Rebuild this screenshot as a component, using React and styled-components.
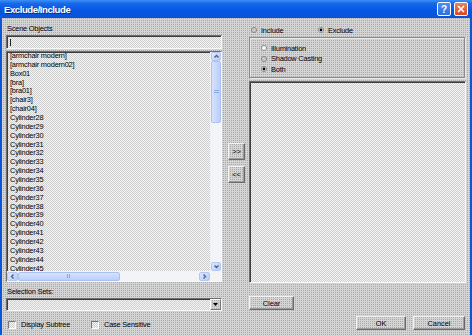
import React from "react";
import styled, { createGlobalStyle } from "styled-components";

const GlobalStyle = createGlobalStyle`
  html, body { margin: 0; padding: 0; background: #c9c9c9; }
  body { font-family: "Liberation Sans", Arial, sans-serif; }
`;

// dithered textures like the 256-colour capture
const dialogBg = "conic-gradient(#a9a9a9 0 25%, #d4d4d4 0) 0 0 / 2px 2px";
const listBg = "conic-gradient(#cfcfcf 0 25%, #f4f4f4 0 50%, #cfcfcf 0 75%, #f4f4f4 0) 0 0 / 2px 2px";

const Window = styled.div`
  width: 472px;
  height: 335px;
  display: flex;
  flex-direction: column;
  background: #0b55d8;
  overflow: hidden;
  font-size: 7.4px;
  letter-spacing: -0.2px;
  color: #000;
`;

const TitleBar = styled.div`
  height: 18px;
  flex: none;
  display: flex;
  align-items: center;
  padding: 0 4px 0 4px;
  background: linear-gradient(#3d8ff6 0%, #1668ea 20%, #0758e4 55%, #0a52d6 100%);
`;

const Title = styled.div`
  flex: 1;
  color: #fff;
  font-weight: bold;
  font-size: 9.6px;
  letter-spacing: -0.45px;
  text-shadow: 1px 1px 0 #0a2d8c;
`;

const TitleButton = styled.div`
  width: 12px;
  height: 12px;
  margin-left: 3px;
  border: 1px solid #fff;
  border-radius: 2px;
  display: flex;
  align-items: center;
  justify-content: center;
  background: ${(p) => (p.$close ? "linear-gradient(#e9835d, #d9481d)" : "linear-gradient(#4d8ef0, #2f6fe0)")};
  color: #fff;
  font-weight: bold;
  font-size: 10px;
`;

const Client = styled.div`
  flex: 1;
  margin: 0 2px 0 2px;
  background: ${dialogBg};
  display: flex;
  padding: 0 4px 0 4px;
`;

const LeftCol = styled.div`
  width: 216px;
  display: flex;
  flex-direction: column;
`;

const MidCol = styled.div`
  width: 27px;
  display: flex;
  flex-direction: column;
  gap: 6px;
  padding: 125px 0 0 6px;
  box-sizing: border-box;
`;

const RightCol = styled.div`
  width: 217px;
  display: flex;
  flex-direction: column;
`;

const Label = styled.div`
  height: 9px;
  line-height: 9px;
  margin-top: ${(p) => p.$top}px;
  padding-left: 1px;
  white-space: nowrap;
`;

const Sunken = styled.div`
  box-sizing: border-box;
  border-top: 1px solid #6e6e6e;
  border-left: 1px solid #6e6e6e;
  border-bottom: 1px solid #f8f8f8;
  border-right: 1px solid #f8f8f8;
  box-shadow: inset 1px 1px 0 #3c3c3c;
  background: ${listBg};
`;

const TextInput = styled(Sunken)`
  height: 14px;
  margin-top: 2px;
  padding: 2px 3px;
`;

const Caret = styled.div`
  width: 1px;
  height: 7px;
  margin-top: 1px;
  background: #222;
`;

const ListBox = styled(Sunken)`
  margin-top: ${(p) => p.$top}px;
  height: ${(p) => p.$h}px;
  display: grid;
  grid-template-columns: 1fr ${(p) => (p.$bars ? "11px" : "0")};
  grid-template-rows: 1fr ${(p) => (p.$bars ? "10px" : "0")};
  overflow: hidden;
`;

const Items = styled.div`
  overflow: hidden;
  padding: 0 0 0 3px;
`;

const Item = styled.div`
  height: 8.87px;
  line-height: 8.87px;
  white-space: nowrap;
`;

const VTrack = styled.div`
  background: #f3f4f8;
  display: flex;
  flex-direction: column;
  align-items: center;
  border-left: 1px solid #eef0f6;
`;

const HTrack = styled.div`
  background: #f3f4f8;
  display: flex;
  align-items: center;
`;

const Corner = styled.div`
  background: #f4f4f4;
`;

const ArrowBtn = styled.div`
  width: ${(p) => (p.$h ? 11 : 10)}px;
  height: ${(p) => (p.$h ? 9 : 9)}px;
  flex: none;
  box-sizing: border-box;
  border: 1px solid #b4c6f2;
  border-radius: 2px;
  background: linear-gradient(135deg, #dde7fd, #b8cbf6);
  display: flex;
  align-items: center;
  justify-content: center;
`;

const Thumb = styled.div`
  box-sizing: border-box;
  border: 1px solid #a9c0f2;
  border-radius: 2px;
  background: ${(p) => (p.$h ? "linear-gradient(#d6e2fd, #bccff8)" : "linear-gradient(90deg, #d6e2fd, #bccff8)")};
  width: ${(p) => (p.$h ? "102px" : "10px")};
  height: ${(p) => (p.$h ? "9px" : "62px")};
  display: flex;
  align-items: center;
  justify-content: center;
`;

const Grip = styled.div`
  width: ${(p) => (p.$h ? "4px" : "5px")};
  height: ${(p) => (p.$h ? "4px" : "4px")};
  background: ${(p) =>
    p.$h
      ? "repeating-linear-gradient(90deg, #8aa6e6 0 1px, transparent 1px 2px)"
      : "repeating-linear-gradient(#8aa6e6 0 1px, transparent 1px 2px)"};
`;

const VSpace = styled.div`
  flex: 1;
`;

const Chevron = ({ dir }) => {
  const d = {
    up: "M1.5 4.5 L3.5 2.5 L5.5 4.5",
    down: "M1.5 2.5 L3.5 4.5 L5.5 2.5",
    left: "M4.5 1.5 L2.5 3.5 L4.5 5.5",
    right: "M2.5 1.5 L4.5 3.5 L2.5 5.5",
  }[dir];
  return (
    <svg width="7" height="7" viewBox="0 0 7 7">
      <path d={d} fill="none" stroke="#4d6185" strokeWidth="1.3" />
    </svg>
  );
};

const Combo = styled(Sunken)`
  height: 13px;
  margin-top: 2px;
  display: flex;
  justify-content: flex-end;
`;

const ComboButton = styled.div`
  width: 11px;
  height: 100%;
  box-sizing: border-box;
  border-left: 1px solid #fff;
  border-top: 1px solid #fff;
  border-right: 1px solid #777;
  border-bottom: 1px solid #777;
  background: ${dialogBg};
  display: flex;
  align-items: center;
  justify-content: center;
`;

const CheckRow = styled.div`
  display: flex;
  align-items: center;
  height: 9px;
  margin-top: 9px;
  padding-left: 2px;
`;

const CheckItem = styled.label`
  display: flex;
  align-items: center;
  gap: 5px;
  width: ${(p) => p.$w}px;
  white-space: nowrap;
`;

const CheckBox = styled.span`
  width: 8px;
  height: 8px;
  box-sizing: border-box;
  border-top: 1px solid #777;
  border-left: 1px solid #777;
  border-bottom: 1px solid #fff;
  border-right: 1px solid #fff;
  background: ${listBg};
`;

const RadioRow = styled.div`
  display: flex;
  align-items: center;
  height: 8px;
  margin-top: 8px;
  padding-left: 2px;
`;

const RadioItem = styled.div`
  display: flex;
  align-items: center;
  gap: 4px;
  width: ${(p) => (p.$w ? `${p.$w}px` : "auto")};
  height: ${(p) => (p.$row ? "10.5px" : "auto")};
  white-space: nowrap;
`;

const Radio = ({ checked, dim }) => (
  <svg width="6" height="6" viewBox="0 0 6 6">
    <circle cx="3" cy="3" r="2.6" fill={dim ? "#c8c8c8" : "#f4f4f4"} stroke="#7a7a7a" strokeWidth="0.8" />
    {checked && <circle cx="3" cy="3" r="1.4" fill="#000" />}
  </svg>
);

const GroupBox = styled.div`
  margin-top: 3px;
  width: 216px;
  height: 41px;
  box-sizing: border-box;
  border: 1px solid #8a8a8a;
  box-shadow: inset 1px 1px 0 #e8e8e8, 1px 1px 0 #e8e8e8;
  padding: 5px 0 0 11px;
`;

const PushButton = styled.button`
  box-sizing: border-box;
  width: ${(p) => p.$w}px;
  height: 14px;
  margin: 0;
  padding: 0;
  font: inherit;
  color: #000;
  border-top: 1px solid #f4f4f4;
  border-left: 1px solid #f4f4f4;
  border-right: 1px solid #6a6a6a;
  border-bottom: 1px solid #6a6a6a;
  box-shadow: inset -1px -1px 0 #9c9c9c;
  background: ${dialogBg};
`;

const ClearRow = styled.div`
  margin-top: 13px;
`;

const FooterRow = styled.div`
  margin-top: 6px;
  display: flex;
  justify-content: flex-end;
  gap: 7px;
  padding-right: 1px;
`;

const objects = [
  "[armchair modern]",
  "[armchair modern02]",
  "Box01",
  "[bra]",
  "[bra01]",
  "[chair3]",
  "[chair04]",
];
for (let i = 28; i <= 45; i++) objects.push(`Cylinder${i}`);

export default function App() {
  return (
    <Window>
      <GlobalStyle />
      <TitleBar>
        <Title>Exclude/Include</Title>
        <TitleButton>?</TitleButton>
        <TitleButton $close>
          <svg width="8" height="8" viewBox="0 0 8 8">
            <path d="M1 1 L7 7 M7 1 L1 7" stroke="#fff" strokeWidth="1.6" />
          </svg>
        </TitleButton>
      </TitleBar>
      <Client>
        <LeftCol>
          <Label $top={6}>Scene Objects</Label>
          <TextInput>
            <Caret />
          </TextInput>
          <ListBox $top={2} $h={231} $bars>
            <Items>
              {objects.map((o) => (
                <Item key={o}>{o}</Item>
              ))}
            </Items>
            <VTrack>
              <ArrowBtn>
                <Chevron dir="up" />
              </ArrowBtn>
              <Thumb>
                <Grip />
              </Thumb>
              <VSpace />
              <ArrowBtn>
                <Chevron dir="down" />
              </ArrowBtn>
            </VTrack>
            <HTrack>
              <ArrowBtn $h>
                <Chevron dir="left" />
              </ArrowBtn>
              <Thumb $h>
                <Grip $h />
              </Thumb>
              <VSpace />
              <ArrowBtn $h>
                <Chevron dir="right" />
              </ArrowBtn>
            </HTrack>
            <Corner />
          </ListBox>
          <Label $top={5}>Selection Sets:</Label>
          <Combo>
            <ComboButton>
              <svg width="5" height="3" viewBox="0 0 5 3">
                <path d="M0 0 H5 L2.5 3 Z" fill="#000" />
              </svg>
            </ComboButton>
          </Combo>
          <CheckRow>
            <CheckItem $w={83}>
              <CheckBox />
              Display Subtree
            </CheckItem>
            <CheckItem>
              <CheckBox />
              Case Sensitive
            </CheckItem>
          </CheckRow>
        </LeftCol>
        <MidCol>
          <PushButton $w={17} style={{ height: 17 }}>&gt;&gt;</PushButton>
          <PushButton $w={17} style={{ height: 17 }}>&lt;&lt;</PushButton>
        </MidCol>
        <RightCol>
          <RadioRow>
            <RadioItem $w={67}>
              <Radio dim />
              Include
            </RadioItem>
            <RadioItem>
              <Radio checked />
              Exclude
            </RadioItem>
          </RadioRow>
          <GroupBox>
            <RadioItem $row>
              <Radio />
              Illumination
            </RadioItem>
            <RadioItem $row>
              <Radio dim />
              Shadow Casting
            </RadioItem>
            <RadioItem $row>
              <Radio checked />
              Both
            </RadioItem>
          </GroupBox>
          <ListBox $top={3} $h={202}>
            <Items />
          </ListBox>
          <ClearRow>
            <PushButton $w={45}>Clear</PushButton>
          </ClearRow>
          <FooterRow>
            <PushButton $w={50}>OK</PushButton>
            <PushButton $w={52}>Cancel</PushButton>
          </FooterRow>
        </RightCol>
      </Client>
    </Window>
  );
}
